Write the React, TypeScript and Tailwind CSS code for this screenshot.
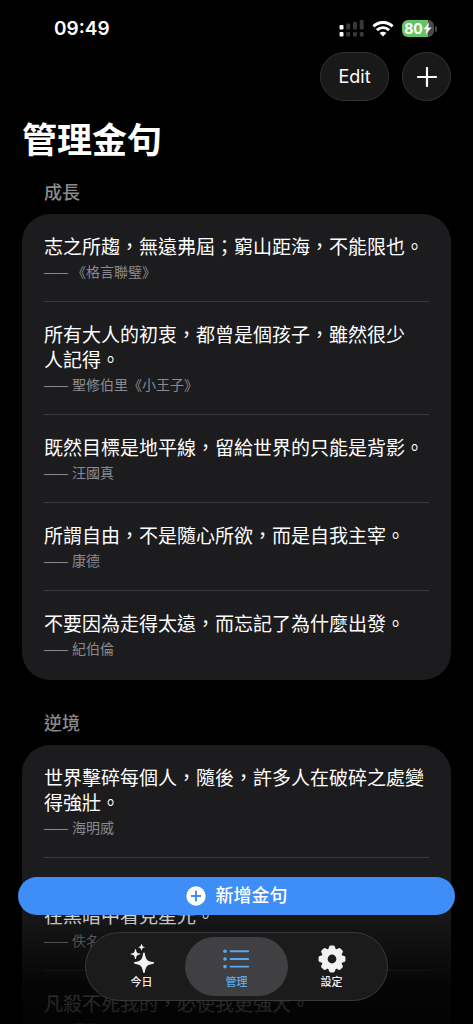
import { useState } from "react";
import clsx from "clsx";

type Quote = { text: string; author: string };
type Section = { title: string; quotes: Quote[] };

const sections: Section[] = [
  {
    title: "成長",
    quotes: [
      { text: "志之所趨，無遠弗屆；窮山距海，不能限也。", author: "《格言聯璧》" },
      { text: "所有大人的初衷，都曾是個孩子，雖然很少\n人記得。", author: "聖修伯里《小王子》" },
      { text: "既然目標是地平線，留給世界的只能是背影。", author: "汪國真" },
      { text: "所謂自由，不是隨心所欲，而是自我主宰。", author: "康德" },
      { text: "不要因為走得太遠，而忘記了為什麼出發。", author: "紀伯倫" },
    ],
  },
  {
    title: "逆境",
    quotes: [
      { text: "世界擊碎每個人，隨後，許多人在破碎之處變\n得強壯。", author: "海明威" },
      { text: "\n在黑暗中看見星光。", author: "佚名" },
      { text: "凡殺不死我的，必使我更強大。", author: "尼采" },
    ],
  },
];

const SignalIcon = () => (
  <svg width="25" height="17" viewBox="0 0 25 17" aria-hidden="true">
    <g fill="#fff">
      <rect x="0.5" y="5" width="4" height="4.5" rx="1" />
      <rect x="0.5" y="12" width="4" height="4.5" rx="1" />
    </g>
    <g fill="#38383a">
      <rect x="7.2" y="3.6" width="4" height="5.9" rx="1" />
      <rect x="14" y="2" width="4" height="7.5" rx="1" />
      <rect x="20.7" y="0" width="4" height="9.5" rx="1" />
      <rect x="7.2" y="12" width="4" height="4.5" rx="1" />
      <rect x="14" y="12" width="4" height="4.5" rx="1" />
      <rect x="20.7" y="12" width="4" height="4.5" rx="1" />
    </g>
  </svg>
);

const WifiIcon = () => (
  <svg width="22" height="16" viewBox="0 0 22 16" fill="none" stroke="#fff" strokeWidth="2.9" aria-hidden="true">
    <path d="M1.4 5.4a13.6 13.6 0 0 1 19.2 0" />
    <path d="M4.9 9.1a8.7 8.7 0 0 1 12.2 0" />
    <path d="M11 15.6 7.6 12.1a4.9 4.9 0 0 1 6.8 0Z" fill="#fff" stroke="none" />
  </svg>
);

const Battery = () => (
  <div className="flex items-center gap-px">
    <div className="flex h-[17px] w-8 items-center justify-center rounded-[6px] bg-linear-to-r from-[#65c466] from-80% to-[#4a4a4c] to-80%">
      <span className="text-[14px] leading-4 font-bold">80</span>
      <svg width="9" height="13" viewBox="0 0 9 13" fill="#fff" aria-hidden="true">
        <path d="M6.2 0.4 0.6 7.2h3.1L2.6 12.6 8.5 5.6H5.2Z" />
      </svg>
    </div>
    <span className="h-[6px] w-[2px] rounded-r-full bg-[#4a4a4c]" />
  </div>
);

const SparklesIcon = () => (
  <svg width="28" height="30" viewBox="0 0 28 30" fill="currentColor" aria-hidden="true">
    <path d="M16 8.6c.5 0 .7.3.8.8 1.2 6.4 2.3 7.6 8.4 8.6.6.1.9.4.9.9s-.3.8-.9.9c-6.1 1.1-7.2 2.2-8.4 8.5-.1.5-.3.8-.8.8s-.8-.3-.9-.8c-1.1-6.3-2.2-7.4-8.2-8.5-.6-.1-.9-.4-.9-.9s.3-.8.9-.9c6-1.1 7.1-2.2 8.2-8.6.1-.5.4-.8.9-.8Z" />
    <path d="M7.5 5c.3 0 .4.2.5.5.6 3.1 1 3.6 3.9 4.1.4.1.5.2.5.5s-.1.5-.5.5c-2.9.5-3.3 1-3.9 4-.1.4-.2.5-.5.5s-.5-.1-.5-.5c-.6-3-1-3.5-3.9-4-.4 0-.5-.2-.5-.5s.1-.4.5-.5c2.9-.5 3.3-1 3.9-4.1 0-.3.2-.5.5-.5Z" />
    <path d="M13.6 0c.2 0 .3.1.3.3.4 2 .7 2.3 2.5 2.6.2 0 .4.1.4.3s-.2.3-.4.3c-1.8.4-2.1.7-2.5 2.6 0 .2-.1.4-.3.4s-.4-.2-.4-.4c-.4-1.9-.7-2.2-2.4-2.6-.3 0-.4-.1-.4-.3s.1-.3.4-.3c1.7-.3 2-.6 2.4-2.6 0-.2.2-.3.4-.3Z" />
  </svg>
);

const ListIcon = () => (
  <svg width="28" height="30" viewBox="0 0 28 30" stroke="currentColor" strokeWidth="1.9" strokeLinecap="round" aria-hidden="true">
    {[7.2, 15, 22.6].map((y) => (
      <g key={y}>
        <circle cx="2" cy={y} r="1.8" fill="currentColor" stroke="none" />
        <path d={`M7.6 ${y}h17.6`} />
      </g>
    ))}
  </svg>
);

const GearIcon = () => (
  <svg width="28" height="30" viewBox="-14 -15 28 30" fill="currentColor" aria-hidden="true">
    <circle r="7.4" fill="none" stroke="currentColor" strokeWidth="6" />
    {[0, 45, 90, 135, 180, 225, 270, 315].map((angle) => (
      <path key={angle} transform={`rotate(${angle})`} d="M-4-9-2.9-12.3Q-2.5-13.4-1.4-13.4H1.4Q2.5-13.4 2.9-12.3L4-9Z" />
    ))}
  </svg>
);

const tabs = [
  { label: "今日", icon: <SparklesIcon /> },
  { label: "管理", icon: <ListIcon /> },
  { label: "設定", icon: <GearIcon /> },
];

const QuoteRow = ({ text, author }: Quote) => (
  <li className="border-b border-[#38383a] pt-[21px] pb-[19px] last:border-b-0 last:pb-[21px]">
    <p className="text-[19px] leading-[25px] whitespace-pre">{text}</p>
    <p className="mt-0.5 text-sm leading-5 text-[#8a8a8e]">
      <span className="text-xs">——</span> {author}
    </p>
  </li>
);

const App = () => {
  const [activeTab, setActiveTab] = useState("管理");

  return (
    <div
      lang="zh-Hant"
      className="relative h-screen overflow-hidden bg-black font-['Inter','Noto_Sans_CJK_TC',sans-serif] text-white"
    >
      <div className="flex h-[52px] items-center justify-between pt-[5px] pr-9 pl-[54px]">
        <span className="text-[19px] leading-6 font-semibold">09:49</span>
        <div className="flex items-center gap-2">
          <SignalIcon />
          <WifiIcon />
          <Battery />
        </div>
      </div>

      <header className="px-[22px]">
        <div className="flex justify-end gap-[13px]">
          <button className="h-[49px] w-[69px] rounded-full border border-[#333335] bg-[#19191a] text-lg">Edit</button>
          <button
            aria-label="新增"
            className="flex size-[49px] items-center justify-center rounded-full border border-[#333335] bg-[#19191a]"
          >
            <svg width="20" height="20" viewBox="0 0 20 20" stroke="#fff" strokeWidth="2.2" strokeLinecap="round" aria-hidden="true">
              <path d="M10 1v18M1 10h18" />
            </svg>
          </button>
        </div>
        <h1 className="mt-[17px] text-[35px] leading-[44px] font-bold">管理金句</h1>
      </header>

      <main className="mt-[18px] space-y-[31px] px-[22px]">
        {sections.map((section) => (
          <section key={section.title}>
            <h2 className="px-[22px] text-lg leading-[26px] font-medium text-[#8a8a8e]">{section.title}</h2>
            <ul className="mt-2 rounded-[28px] bg-[#1c1c1e] px-[22px]">
              {section.quotes.map((quote) => (
                <QuoteRow key={quote.author} {...quote} />
              ))}
            </ul>
          </section>
        ))}
      </main>

      <div className="absolute inset-x-0 bottom-0">
        <div className="pointer-events-none absolute inset-x-0 bottom-0 h-32 bg-linear-to-b from-transparent via-black/80 via-70% to-black/90" />
        <div className="relative px-[18px] pb-[23px]">
          <button className="flex h-[38px] w-full items-center justify-center gap-[10px] rounded-full bg-[#3f8ef7] text-lg font-medium">
            <svg width="20" height="20" viewBox="0 0 20 20" aria-hidden="true">
              <circle cx="10" cy="10" r="9.7" fill="#fff" />
              <path d="M10 5.6v8.8M5.6 10h8.8" stroke="#3f8ef7" strokeWidth="2" strokeLinecap="round" />
            </svg>
            新增金句
          </button>
          <nav className="mx-auto mt-[17px] flex h-[69px] w-[303px] rounded-full border border-[#38383a] bg-[#1c1c1e]/95 px-2 py-1">
            {tabs.map((tab) => (
              <button
                key={tab.label}
                onClick={() => setActiveTab(tab.label)}
                className={clsx(
                  "flex flex-1 flex-col items-center rounded-full pt-[7px] text-[11px] leading-4 font-medium",
                  activeTab === tab.label ? "-mx-1 bg-[#404042] px-1 text-[#5ba9ea]" : "text-[#f2f2f4]"
                )}
              >
                {tab.icon}
                {tab.label}
              </button>
            ))}
          </nav>
        </div>
      </div>
    </div>
  );
};

export default App;
